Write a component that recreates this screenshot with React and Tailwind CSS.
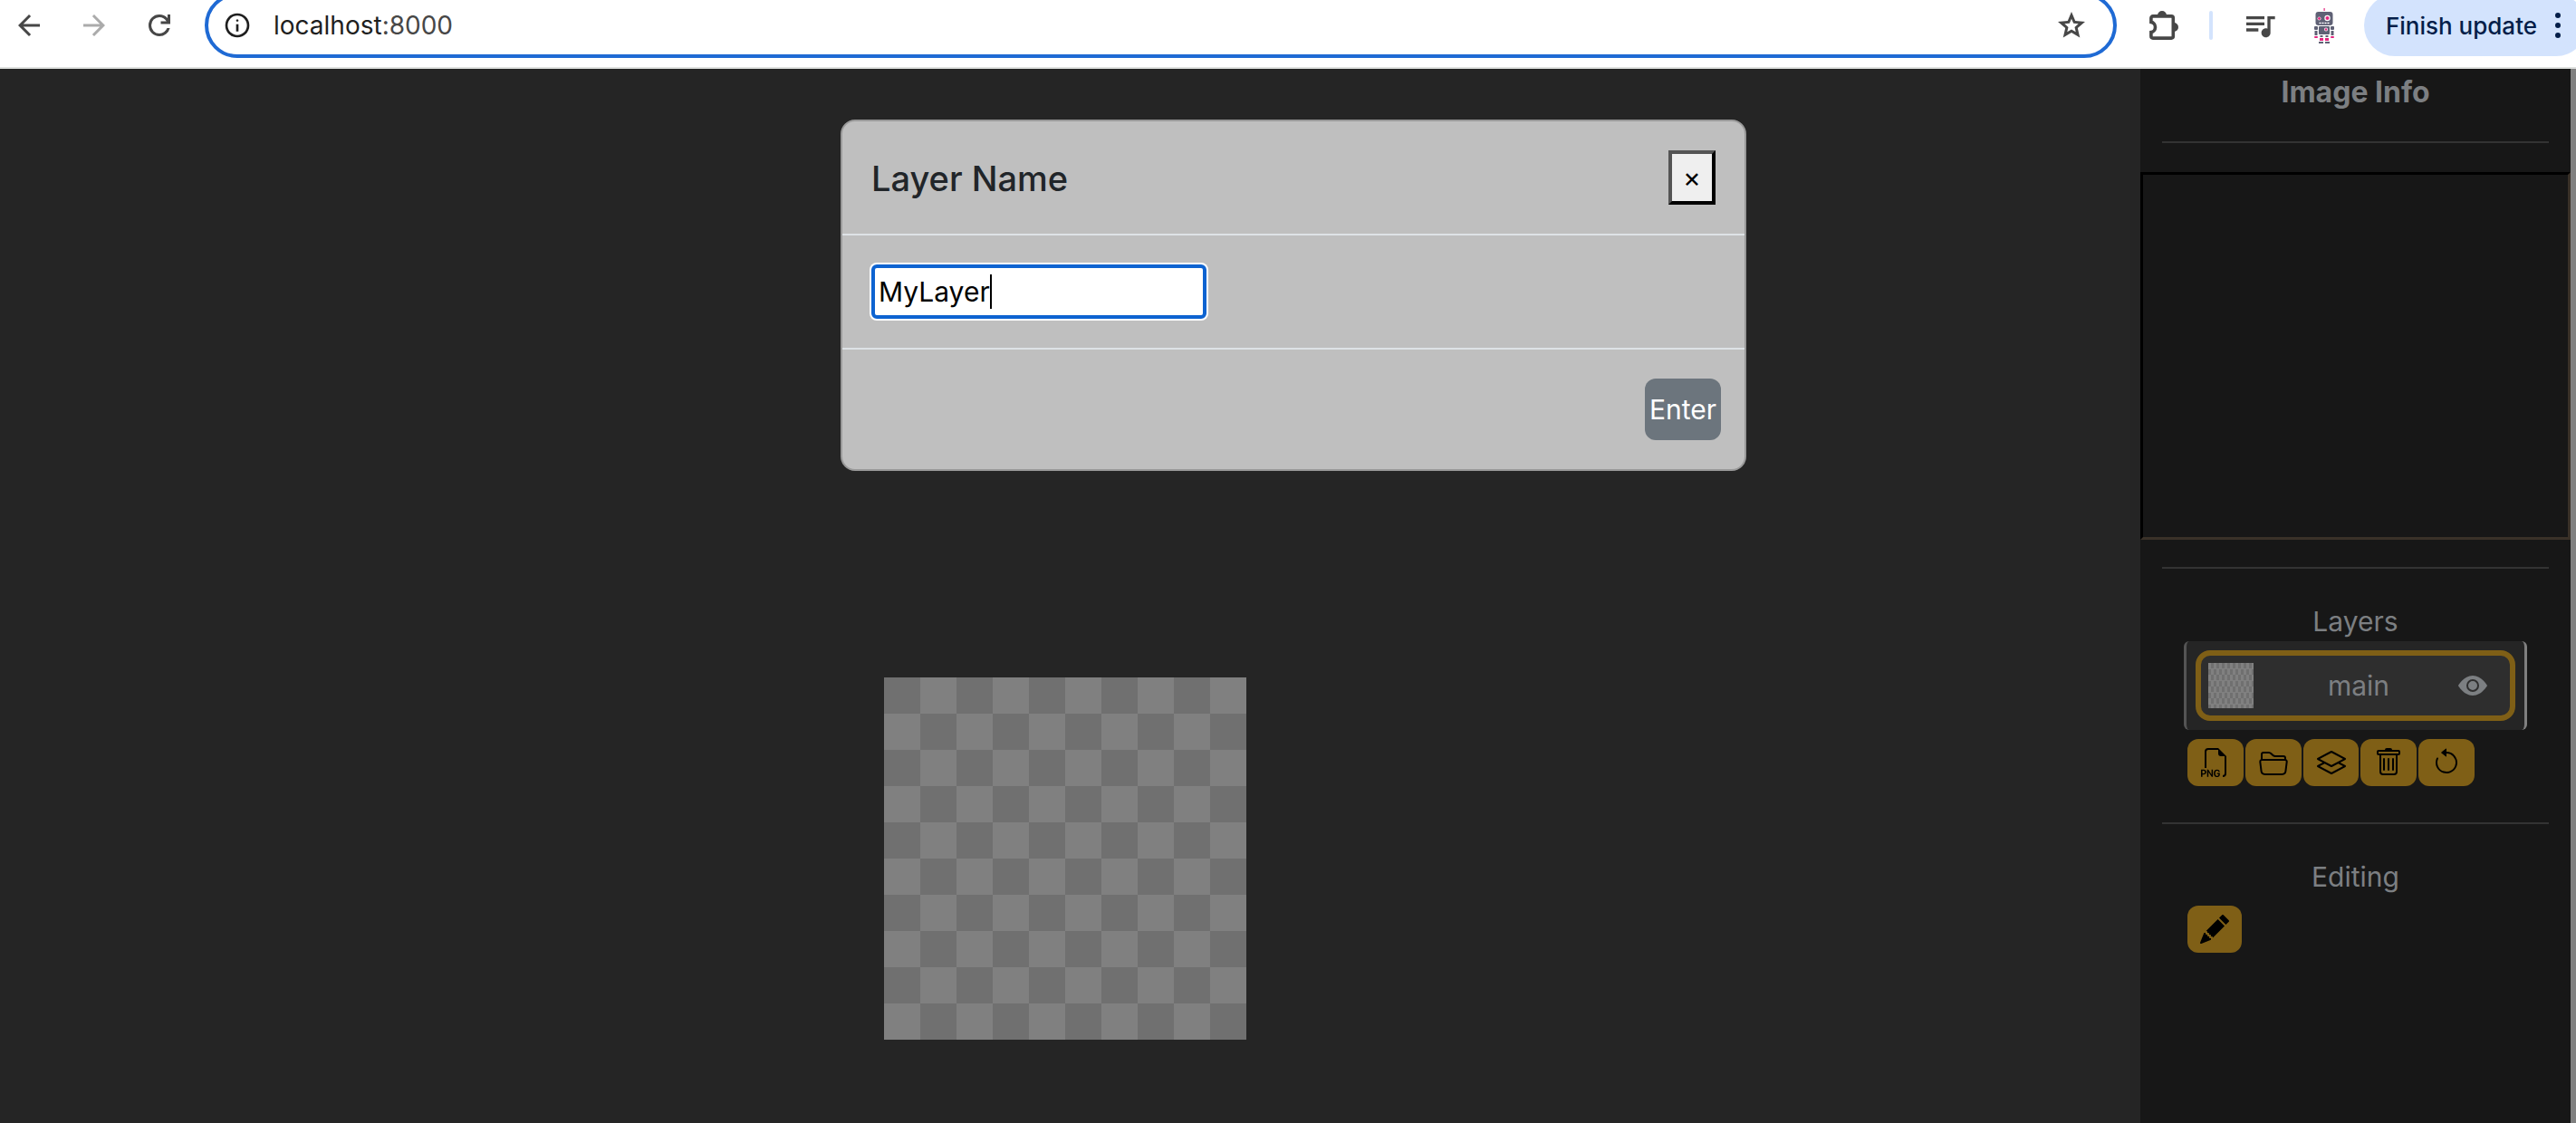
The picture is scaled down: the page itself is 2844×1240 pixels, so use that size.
import React from "react";
import {
  BsArrowCounterclockwise,
  BsEyeFill,
  BsFiletypePng,
  BsFolder2Open,
  BsLayers,
  BsPencilFill,
  BsTrash,
} from "react-icons/bs";
import { MdQueueMusic } from "react-icons/md";

function Symbol({ d, className }) {
  return (
    <svg viewBox="0 -960 960 960" fill="currentColor" className={className} aria-hidden="true">
      <path d={d} />
    </svg>
  );
}

const BACK = "m313-440 224 224-57 56-320-320 320-320 57 56-224 224h487v80H313Z";
const FORWARD = "M647-440H160v-80h487L423-744l57-56 320 320-320 320-57-56 224-224Z";
const RELOAD =
  "M480-160q-134 0-227-93t-93-227q0-134 93-227t227-93q69 0 132 28.500T720-690v-110h80v280H520v-80h168q-32-56-87.500-88T480-720q-100 0-170 70t-70 170q0 100 70 170t170 70q77 0 139-44t87-116h84q-28 106-114 173t-196 67Z";
const INFO =
  "M440-280h80v-240h-80v240Zm40-320q17 0 28.500-11.500T520-640q0-17-11.500-28.500T480-680q-17 0-28.500 11.500T440-640q0 17 11.500 28.500T480-600Zm0 520q-83 0-156-31.500T197-197q-54-54-85.500-127T80-480q0-83 31.500-156T197-763q54-54 127-85.500T480-880q83 0 156 31.500T763-763q54 54 85.500 127T880-480q0 83-31.500 156T763-197q-54 54-127 85.500T480-80Zm0-80q134 0 227-93t93-227q0-134-93-227t-227-93q-134 0-227 93t-93 227q0 134 93 227t227 93Z";
const STAR =
  "m354-287 126-76 126 77-33-144 111-96-146-13-58-136-58 135-146 13 111 97-33 143ZM233-120l65-281L80-590l288-25 112-265 112 265 288 25-218 189 65 281-247-149-247 149Z";

function Puzzle() {
  return (
    <svg viewBox="0 0 32 32" className="size-8" aria-hidden="true">
      <path
        d="M1.900 7.900a2 2 0 0 1 2-2H24.300a2 2 0 0 1 2 2V28.100a2 2 0 0 1-2 2H3.900a2 2 0 0 1-2-2V23.600c2.800-.4 4.600-2.900 4.600-5.600S4.700 12.800 1.900 12.400Z"
        fill="none"
        stroke="currentColor"
        strokeWidth="3.600"
      />
      <path d="M9 5a5 5 0 0 1 10 0ZM27 13a5 5 0 0 1 0 10Z" fill="currentColor" />
    </svg>
  );
}

function Robot() {
  return (
    <svg viewBox="0 0 22 39" className="h-[39px] w-[22px]" aria-hidden="true">
      <g fill="#5f6175">
        <rect x="1.500" y="4" width="19" height="15" rx="3" />
        <rect x="5" y="20" width="12" height="9" rx="1" />
        <rect x="0" y="20" width="4" height="4" rx="1" />
        <rect x="18" y="20" width="4" height="4" rx="1" />
        <rect x="0.500" y="25" width="3" height="5" />
        <rect x="18.500" y="25" width="3" height="5" />
        <rect x="6.500" y="30" width="3" height="2" />
        <rect x="12.500" y="30" width="3" height="2" />
        <rect x="5" y="37" width="5" height="2" />
        <rect x="12" y="37" width="5" height="2" />
      </g>
      <g fill="#e3267f">
        <rect x="10.500" y="0" width="1.200" height="3" />
        <rect x="0" y="31" width="4" height="2" rx="1" />
        <rect x="18" y="31" width="4" height="2" rx="1" />
        <rect x="6" y="33" width="4" height="3" />
        <rect x="12" y="33" width="4" height="3" />
      </g>
      <g fill="#fff" stroke="#fff">
        <circle cx="5.500" cy="11.500" r="2" stroke="none" />
        <circle cx="14.500" cy="11" r="3.200" stroke="none" />
        <circle cx="13" cy="23.500" r="2" stroke="none" />
        <path d="M5.500 16.500h11" strokeWidth="1.600" strokeDasharray="2 1" />
      </g>
      <g fill="#e3267f">
        <circle cx="5.500" cy="11.500" r="1.400" />
        <circle cx="14.500" cy="11" r="2" />
        <circle cx="13" cy="23.500" r="1.200" />
      </g>
    </svg>
  );
}

function BrowserBar() {
  return (
    <header className="flex h-[76px] shrink-0 items-center overflow-hidden border-b-2 border-[#dfe1df] bg-white pb-[18px] pl-3.5 text-[#474747]">
      <nav className="flex shrink-0 gap-9" aria-label="Browser">
        <button type="button" aria-label="Back"><Symbol d={BACK} className="size-9" /></button>
        <button type="button" aria-label="Forward" className="text-[#ababab]"><Symbol d={FORWARD} className="size-9" /></button>
        <button type="button" aria-label="Reload"><Symbol d={RELOAD} className="size-9" /></button>
      </nav>
      <div className="ml-8 flex h-[72px] min-w-0 flex-1 shrink-0 items-center rounded-full border-4 border-[#1f6ad4] pr-7 pl-4">
        <Symbol d={INFO} className="size-8 text-[#1f1f1f]" />
        <a href="#" className="ml-6 flex-1 text-[28px]">
          <span className="text-[#1f1f1f]">localhost</span>:8000
        </a>
        <button type="button" aria-label="Bookmark"><Symbol d={STAR} className="size-9" /></button>
      </div>
      <button type="button" aria-label="Extensions" className="ml-9 shrink-0"><Puzzle /></button>
      <div className="ml-[34px] h-8 w-1 shrink-0 rounded-full bg-[#d3e3fd]" />
      <button type="button" aria-label="Media" className="ml-8 shrink-0"><MdQueueMusic className="size-10" /></button>
      <button type="button" aria-label="Profile" className="ml-10 shrink-0"><Robot /></button>
      <button
        type="button"
        className="-mr-3 ml-[33px] flex h-[68px] shrink-0 items-center rounded-full bg-[#d3e3fd] pr-[29px] pl-6 text-[26px] font-medium text-[#041e49]"
      >
        Finish update
        <span className="ml-5 flex flex-col gap-[5px]">
          <span className="size-1.5 rounded-full bg-current" />
          <span className="size-1.5 rounded-full bg-current" />
          <span className="size-1.5 rounded-full bg-current" />
        </span>
      </button>
    </header>
  );
}

function ToolButton({ label, width = "w-[62px]", children }) {
  return (
    <button type="button" aria-label={label} className={`flex h-[52px] ${width} items-center justify-center rounded-xl bg-[#7f5f16] text-black`}>
      {children}
    </button>
  );
}

function Divider() {
  return <hr className="mx-6 border-t-2 border-[#333333]" />;
}

function Sidebar() {
  return (
    <aside className="w-[475px] shrink-0 bg-[#171717] text-[30px] leading-[52px] text-[#7c7f82]">
      <h2 className="mb-8 h-12 text-center text-[32px] leading-[52px] font-bold">Image Info</h2>
      <Divider />
      <div className="mt-8 mb-[30px] h-[406px] border-[3px] border-t-black border-r-[#3a3128] border-b-[#3a3128] border-l-black" />
      <Divider />
      <h2 className="mt-8 h-12 text-center">Layers</h2>
      <ul className="mx-12 rounded-md border-r-[3px] border-l-[3px] border-r-[#808080] border-l-[#545454] bg-[#252525] p-2.5">
        <li className="flex h-[78px] items-center rounded-2xl border-[6px] border-[#7f5f16] bg-[#2e2e2e] pr-[25px] pl-2">
          <span className="size-[50px] bg-[repeating-conic-gradient(#707070_0_25%,#808080_0_50%)] bg-[length:6px_13px]" />
          <span className="flex-1 pl-1.5 text-center">main</span>
          <button type="button" aria-label="Toggle visibility"><BsEyeFill className="size-8" /></button>
        </li>
      </ul>
      <div className="mt-2.5 mb-10 ml-[52px] flex gap-0.5">
        <ToolButton label="Export PNG"><BsFiletypePng className="size-8" /></ToolButton>
        <ToolButton label="Open"><BsFolder2Open className="size-8" /></ToolButton>
        <ToolButton label="Add layer" width="w-[61px]"><BsLayers className="size-8" /></ToolButton>
        <ToolButton label="Delete layer"><BsTrash className="size-8" /></ToolButton>
        <ToolButton label="Reset"><BsArrowCounterclockwise className="size-8" /></ToolButton>
      </div>
      <Divider />
      <h2 className="mt-8 mb-2.5 h-12 text-center">Editing</h2>
      <div className="ml-[52px] flex">
        <ToolButton label="Pencil" width="w-[60px]"><BsPencilFill className="size-8" /></ToolButton>
      </div>
    </aside>
  );
}

function LayerDialog() {
  return (
    <div className="absolute inset-x-0 top-14 flex justify-center pl-3">
      <div role="dialog" aria-labelledby="layer-title" className="w-[1000px] rounded-2xl border-2 border-[#999999] bg-[#bfbfbf]">
        <div className="flex items-center justify-between border-b-2 border-[#dee2e6] px-8 py-8">
          <h1 id="layer-title" className="h-[60px] text-[38px] leading-[62px] font-medium text-[#212529]">
            <label htmlFor="layer-name">Layer Name</label>
          </h1>
          <button
            type="button"
            aria-label="Close"
            className="h-[60px] w-[52px] border-4 border-t-[#545454] border-r-black border-b-black border-l-[#545454] bg-[#efefef] text-[30px] leading-[52px] text-black"
          >
            ×
          </button>
        </div>
        <div className="flex px-8 py-8">
          <div className="relative">
            <input
              id="layer-name"
              type="text"
              defaultValue="MyLayer"
              className="block h-[60px] w-[370px] rounded-md border-4 border-[#0d63d1] bg-white pl-1 text-[30px] text-black ring-2 ring-white outline-none"
            />
            <div className="pointer-events-none absolute inset-y-0 left-2 flex items-center text-[30px]" aria-hidden="true">
              <span className="invisible">MyLayer</span>
              <span className="h-[38px] w-0.5 bg-black" />
            </div>
          </div>
        </div>
        <div className="flex justify-end border-t-2 border-[#dee2e6] py-8 pr-[26px]">
          <button type="button" className="h-[68px] w-[84px] rounded-xl bg-[#6c757d] text-center text-[30px] text-white">
            Enter
          </button>
        </div>
      </div>
    </div>
  );
}

export default function App() {
  return (
    <div className="flex min-h-screen flex-col overflow-hidden font-['Inter',sans-serif]">
      <BrowserBar />
      <div className="relative flex flex-1 bg-[#252525]">
        <main className="flex flex-1 items-start justify-center pt-[672px] pr-[11px]">
          <div className="size-[400px] bg-[repeating-conic-gradient(#808080_0_25%,#707070_0_50%)] bg-[length:80px_80px]" />
        </main>
        <Sidebar />
        <div className="w-1.5 shrink-0 bg-[#808080]" />
        <LayerDialog />
      </div>
    </div>
  );
}
